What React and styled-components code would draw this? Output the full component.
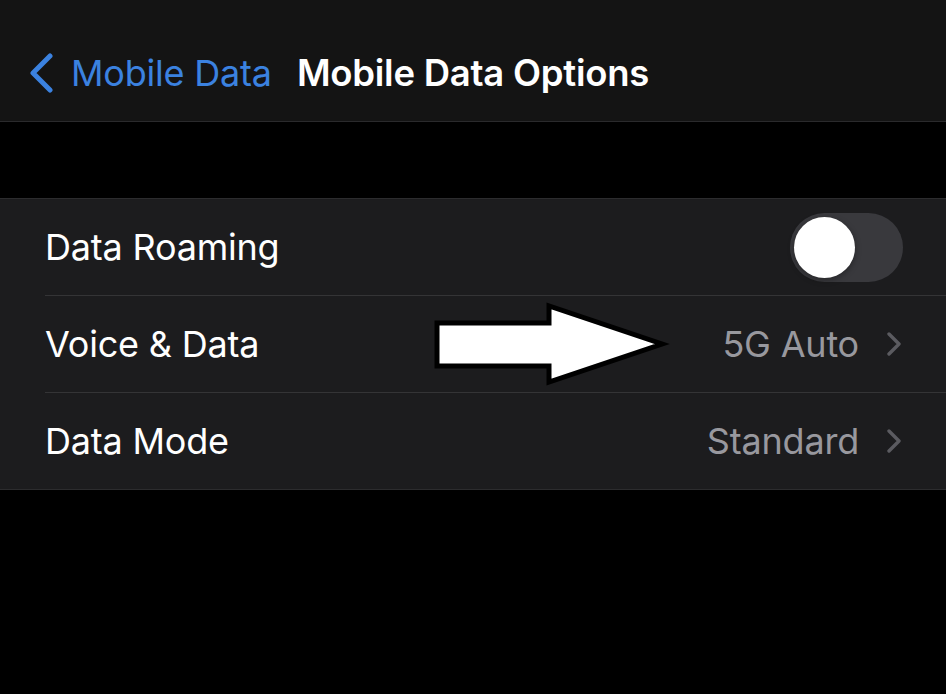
import styled, { createGlobalStyle } from "styled-components";

const GlobalStyle = createGlobalStyle`
  body {
    margin: 0;
    background: #000;
    font-family: Inter, "Noto Sans", sans-serif;
  }
`;

const Page = styled.div`
  position: relative;
  width: 946px;
  height: 694px;
  background: #000;
  overflow: hidden;
`;

const NavBar = styled.div`
  height: 122px;
  box-sizing: border-box;
  padding: 24px 0 0 28px;
  background: #141414;
  border-bottom: 1px solid #2a2a2c;
  display: flex;
  align-items: center;
  gap: 25px;
`;

const BackLink = styled.div`
  display: flex;
  align-items: center;
  gap: 17px;
  color: #3b82e0;
  font-size: 36px;
  letter-spacing: -0.2px;
`;

const Title = styled.div`
  color: #fff;
  font-size: 36.5px;
  font-weight: 600;
  letter-spacing: -0.25px;
`;

const Group = styled.div`
  margin-top: 76px;
  background: #1c1c1e;
  border-top: 1px solid #2c2c2e;
  border-bottom: 1px solid #2c2c2e;
`;

const Row = styled.div`
  height: 96px;
  display: flex;
  align-items: center;
  margin-left: 45px;
  padding-right: 44px;
  border-bottom: ${(p) => (p.last ? "none" : "1px solid #343436")};
`;

const Label = styled.div`
  flex: 1;
  color: #fff;
  font-size: 36px;
  letter-spacing: -0.2px;
`;

const Value = styled.div`
  color: #98989e;
  font-size: 36px;
  letter-spacing: -0.2px;
  margin-right: 27px;
`;

const Toggle = styled.div`
  width: 113px;
  height: 69px;
  border-radius: 35px;
  background: #39393d;
  display: flex;
  align-items: center;
  padding-left: 4px;
  box-sizing: border-box;
  margin-right: -1px;
`;

const Knob = styled.div`
  width: 61px;
  height: 61px;
  border-radius: 50%;
  background: #fff;
  box-shadow: 0 2px 6px rgba(0, 0, 0, 0.35);
`;

const Arrow = styled.svg`
  position: absolute;
  left: 0;
  top: 0;
  pointer-events: none;
`;

const Chevron = ({ color }) => (
  <svg width="16" height="24" viewBox="0 0 16 24" fill="none">
    <path
      d="M3 2 L13 12 L3 22"
      stroke={color}
      strokeWidth="3.4"
      strokeLinecap="round"
      strokeLinejoin="round"
    />
  </svg>
);

const BackChevron = () => (
  <svg width="26" height="40" viewBox="0 0 26 40" fill="none">
    <path
      d="M22 3 L5 20 L22 37"
      stroke="#3b82e0"
      strokeWidth="5"
      strokeLinecap="round"
      strokeLinejoin="round"
    />
  </svg>
);

export default function App() {
  return (
    <Page>
      <GlobalStyle />
      <NavBar>
        <BackLink>
          <BackChevron />
          Mobile Data
        </BackLink>
        <Title>Mobile Data Options</Title>
      </NavBar>
      <Group>
        <Row>
          <Label>Data Roaming</Label>
          <Toggle>
            <Knob />
          </Toggle>
        </Row>
        <Row>
          <Label>Voice &amp; Data</Label>
          <Value>5G Auto</Value>
          <Chevron color="#5b5b60" />
        </Row>
        <Row last>
          <Label>Data Mode</Label>
          <Value>Standard</Value>
          <Chevron color="#5b5b60" />
        </Row>
      </Group>
      <Arrow width="946" height="694">
        <polygon
          points="437,323 549,323 549,306 662,344 549,382 549,366 437,366"
          fill="#fff"
          stroke="#000"
          strokeWidth="5"
          strokeLinejoin="miter"
        />
      </Arrow>
    </Page>
  );
}
